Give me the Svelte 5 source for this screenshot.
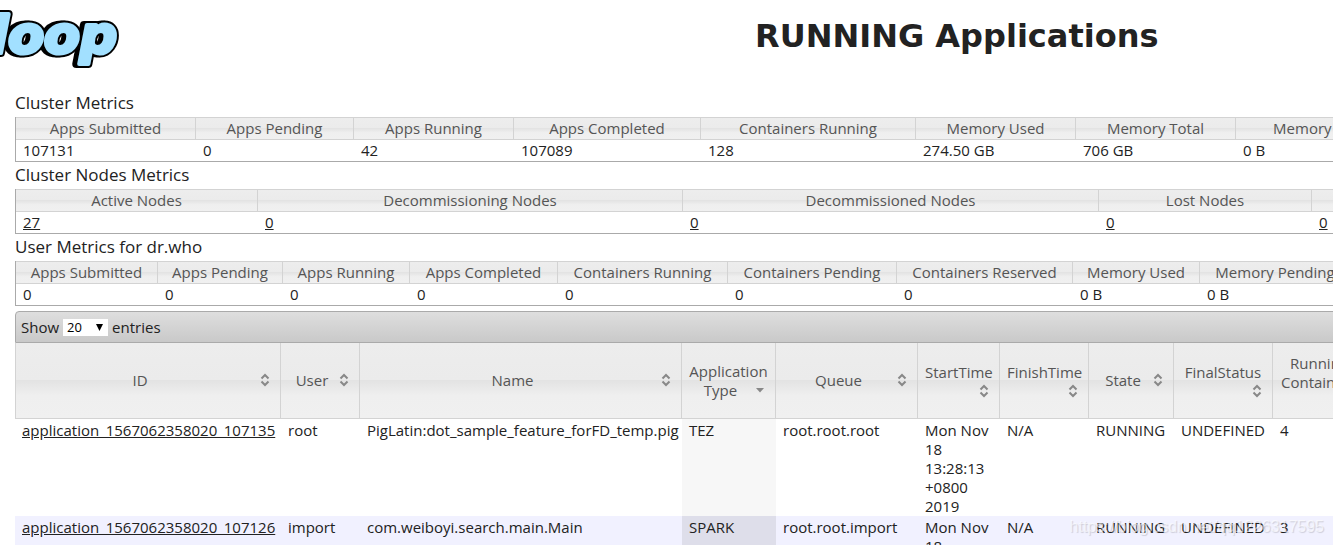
<script lang="ts">
	type Column = { title: string; width: number; value: string };
	type Sort = 'both' | 'down' | 'none';

	const clusterMetrics: Column[] = [
		{ title: 'Apps Submitted', width: 180, value: '107131' },
		{ title: 'Apps Pending', width: 158, value: '0' },
		{ title: 'Apps Running', width: 160, value: '42' },
		{ title: 'Apps Completed', width: 187, value: '107089' },
		{ title: 'Containers Running', width: 215, value: '128' },
		{ title: 'Memory Used', width: 160, value: '274.50 GB' },
		{ title: 'Memory Total', width: 160, value: '706 GB' },
		{ title: 'Memory Reserved', width: 202, value: '0 B' }
	];

	const nodeMetrics: Column[] = [
		{ title: 'Active Nodes', width: 242, value: '27' },
		{ title: 'Decommissioning Nodes', width: 425, value: '0' },
		{ title: 'Decommissioned Nodes', width: 416, value: '0' },
		{ title: 'Lost Nodes', width: 213, value: '0' },
		{ title: '', width: 300, value: '0' }
	];

	const userMetrics: Column[] = [
		{ title: 'Apps Submitted', width: 142, value: '0' },
		{ title: 'Apps Pending', width: 125, value: '0' },
		{ title: 'Apps Running', width: 127, value: '0' },
		{ title: 'Apps Completed', width: 148, value: '0' },
		{ title: 'Containers Running', width: 170, value: '0' },
		{ title: 'Containers Pending', width: 169, value: '0' },
		{ title: 'Containers Reserved', width: 176, value: '0' },
		{ title: 'Memory Used', width: 127, value: '0 B' },
		{ title: 'Memory Pending', width: 151, value: '0 B' }
	];

	const sections = [
		{ name: 'Cluster Metrics', columns: clusterMetrics, linked: false },
		{ name: 'Cluster Nodes Metrics', columns: nodeMetrics, linked: true },
		{ name: 'User Metrics for dr.who', columns: userMetrics, linked: false }
	];

	const appColumns: { title: string; width: number; sort: Sort }[] = [
		{ title: 'ID', width: 266, sort: 'both' },
		{ title: 'User', width: 79, sort: 'both' },
		{ title: 'Name', width: 322, sort: 'both' },
		{ title: 'Application Type', width: 94, sort: 'down' },
		{ title: 'Queue', width: 142, sort: 'both' },
		{ title: 'StartTime', width: 82, sort: 'both' },
		{ title: 'FinishTime', width: 89, sort: 'both' },
		{ title: 'State', width: 85, sort: 'both' },
		{ title: 'FinalStatus', width: 99, sort: 'both' },
		{ title: 'Running Containers', width: 93, sort: 'both' }
	];

	const apps = [
		{
			id: 'application_1567062358020_107135',
			cells: ['root', 'PigLatin:dot_sample_feature_forFD_temp.pig', 'TEZ', 'root.root.root', 'Mon Nov 18 13:28:13 +0800 2019', 'N/A', 'RUNNING', 'UNDEFINED', '4']
		},
		{
			id: 'application_1567062358020_107126',
			cells: ['import', 'com.weiboyi.search.main.Main', 'SPARK', 'root.root.import', 'Mon Nov 18', 'N/A', 'RUNNING', 'UNDEFINED', '3']
		}
	];

	let pageSize = $state('20');
</script>

<div class="page">
	<div class="content">
		<header>
			<svg class="logo" viewBox="0 0 120 60" role="img" aria-label="Hadoop">
				<defs>
					<text id="wordmark" x="-29" y="43">doop</text>
				</defs>
				<use href="#wordmark" x="-3" fill="#000" stroke="#000" stroke-width="8" />
				<use href="#wordmark" fill="#000" stroke="#000" stroke-width="8" />
				<use href="#wordmark" fill="#a2e0ff" stroke="#a2e0ff" stroke-width="4" />
			</svg>
			<h1>RUNNING Applications</h1>
		</header>

		<main>
			{#each sections as section}
				<h2>{section.name}</h2>
				<table class="metrics">
					<colgroup>
						{#each section.columns as col}
							<col style="width: {col.width}px" />
						{/each}
						<col />
					</colgroup>
					<thead>
						<tr>
							{#each section.columns as col}
								<th>{col.title}</th>
							{/each}
							<th></th>
						</tr>
					</thead>
					<tbody>
						<tr>
							{#each section.columns as col}
								<td>
									{#if section.linked}<a href="#nodes">{col.value}</a>{:else}{col.value}{/if}
								</td>
							{/each}
							<td></td>
						</tr>
					</tbody>
				</table>
			{/each}

			<div class="toolbar">
				<label for="page-size">Show</label>
				<div class="picker">
					<select id="page-size" bind:value={pageSize}>
						<option>20</option>
						<option>40</option>
						<option>60</option>
					</select>
					<svg viewBox="0 0 7 7" aria-hidden="true"><path d="M0 0h7L3.500 7z" /></svg>
				</div>
				<span>entries</span>
			</div>

			<table class="apps">
				<colgroup>
					{#each appColumns as col}
						<col style="width: {col.width}px" />
					{/each}
					<col />
				</colgroup>
				<thead>
					<tr>
						{#each appColumns as col}
							<th>
								<div class="heading">
									{col.title}
									<svg class="sort" viewBox="0 0 16 16" aria-hidden="true">
										{#if col.sort === 'both'}
											<path d="M4.500 7.500 8 4l3.500 3.500M4.500 10.500 8 14l3.500-3.500" />
										{:else}
											<path class="solid" d="M4 7h8l-4 4.500z" />
										{/if}
									</svg>
								</div>
							</th>
						{/each}
						<th></th>
					</tr>
				</thead>
				<tbody>
					{#each apps as app}
						<tr>
							<td><a href="#{app.id}">{app.id}</a></td>
							{#each app.cells as cell, i}
								<td class:sorted={i === 2}>{cell}</td>
							{/each}
							<td></td>
						</tr>
					{/each}
				</tbody>
			</table>
		</main>
	</div>
	<div class="watermark">https://blog.csdn.net/qq1226317595</div>
</div>

<style>
	.page {
		position: relative;
		height: 100vh;
		overflow: hidden;
		background: #fff;
		color: #222;
		font: 15px/19px 'Open Sans', 'Noto Sans', sans-serif;
	}

	/* wider than the window: the right side runs out of view */
	.content {
		width: 135%;
	}

	header {
		display: flex;
		align-items: flex-start;
		height: 90px;
		padding-top: 10px;
		box-sizing: border-box;
	}

	.logo {
		width: 120px;
		height: 60px;
		font: italic bold 52px 'DejaVu Sans', sans-serif;
		stroke-linejoin: round;
	}

	h1 {
		flex: 1;
		margin: 6px 6px 0 0;
		font: bold 32px/40px 'DejaVu Sans', Verdana, sans-serif;
		text-align: center;
	}

	main {
		padding-left: 15px;
	}

	h2 {
		margin: 0;
		padding-bottom: 2px;
		font-size: 17px;
		font-weight: normal;
		line-height: 25px;
	}

	table {
		width: 100%;
		table-layout: fixed;
		border-collapse: separate;
		border-spacing: 0;
	}

	th {
		color: #555;
		font-weight: normal;
		background: linear-gradient(#ededed 0%, #ebebeb 49%, #e3e3e3 50%, #efefef 70%, #f0f0f0 100%);
		border: 1px solid #d3d3d3;
		border-left: 0;
	}

	a {
		color: #222;
		text-decoration: underline;
	}

	.metrics {
		border: 1px solid #aaa;
		border-top: 0;
	}

	.metrics th {
		height: 21px;
		padding: 0;
		line-height: 21px;
	}

	.metrics td {
		height: 21px;
		padding: 0 7px;
		line-height: 21px;
	}

	.toolbar {
		display: flex;
		align-items: center;
		gap: 4px;
		height: 30px;
		margin-top: 5px;
		padding-left: 5px;
		background: linear-gradient(#dedede, #c9c9c9);
		border: 1px solid #aaa;
		border-top-left-radius: 4px;
	}

	.picker {
		position: relative;
		display: flex;
	}

	select {
		width: 45px;
		height: 17px;
		padding: 0 4px;
		border: 0;
		border-radius: 0;
		appearance: none;
		background: #fff;
		color: #000;
		font: 13px/17px 'Open Sans', 'Noto Sans', sans-serif;
	}

	.picker svg {
		position: absolute;
		top: 5px;
		right: 5px;
		width: 7px;
		height: 7px;
		pointer-events: none;
	}

	.apps th {
		height: 75px;
		padding: 0 7px;
		border-top: 0;
	}

	.apps th:first-child {
		border-left: 1px solid #d3d3d3;
	}

	.heading {
		display: flow-root;
	}

	.sort {
		float: right;
		width: 16px;
		height: 16px;
		fill: none;
		stroke: #888;
		stroke-width: 2;
	}

	.sort .solid {
		fill: #888;
		stroke: none;
	}

	.apps td {
		padding: 2px 7px 0;
		vertical-align: top;
	}

	.apps td.sorted {
		background: #f7f7f7;
	}

	.apps tbody tr:nth-child(even) {
		background: #f1f1ff;
	}

	.apps tbody tr:nth-child(even) .sorted {
		background: #dedeea;
	}

	.watermark {
		position: absolute;
		right: 9px;
		bottom: 8px;
		color: rgba(255, 255, 255, 0.6);
		font: 16px/20px 'Liberation Sans', sans-serif;
		text-shadow: 1px 1px 1px rgba(0, 0, 0, 0.15);
	}
</style>
